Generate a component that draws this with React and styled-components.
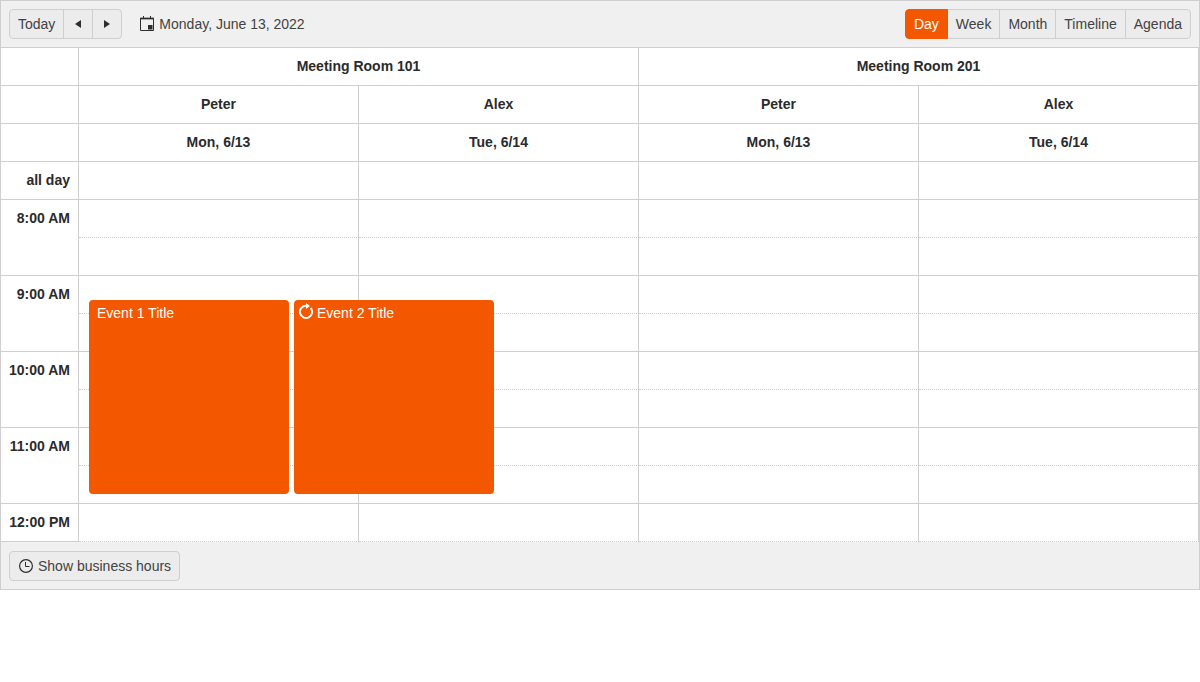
import React from 'react';
import styled, { createGlobalStyle } from 'styled-components';

const GlobalStyle = createGlobalStyle`
    html, body {
        margin: 0;
        padding: 0;
        background: #fff;
    }
    body {
        font-family: "Liberation Sans", Arial, sans-serif;
        font-size: 14px;
        line-height: 20px;
        color: #424242;
    }
`;

const Scheduler = styled.div`
    width: 1200px;
    box-sizing: border-box;
    border: 1px solid #cfcfcf;
`;

const Bar = styled.div`
    height: 47px;
    box-sizing: border-box;
    padding: ${({ $footer }) => ($footer ? '9px 8px 8px' : '8px')};
    display: flex;
    align-items: flex-start;
    background: #f0f0f0;
    border-bottom: ${({ $footer }) => ($footer ? 'none' : '1px solid #cfcfcf')};
`;

const ButtonGroup = styled.div`
    display: flex;
    height: 30px;
`;

const GroupButton = styled.div`
    position: relative;
    z-index: ${({ $active }) => ($active ? 1 : 0)};
    display: flex;
    align-items: center;
    justify-content: center;
    box-sizing: border-box;
    height: 30px;
    width: ${({ $width }) => ($width ? `${$width}px` : 'auto')};
    padding: ${({ $width }) => ($width ? '0' : '0 8px')};
    margin-left: -1px;
    border: 1px solid ${({ $active }) => ($active ? '#f35800' : '#cfcfcf')};
    background: ${({ $active }) => ($active ? '#f35800' : '#ececec')};
    color: ${({ $active }) => ($active ? '#fff' : '#424242')};

    &:first-child {
        margin-left: 0;
        border-radius: 4px 0 0 4px;
    }

    &:last-child {
        border-radius: 0 4px 4px 0;
    }
`;

const DateNav = styled.div`
    display: flex;
    align-items: center;
    gap: 5px;
    height: 30px;
    margin-left: 18px;
    color: #424242;
`;

const Spacer = styled.div`
    flex: 1;
`;

const Body = styled.div`
    position: relative;
    display: grid;
    grid-template-columns: 78px repeat(4, 280px);
    grid-auto-rows: 38px;
    color: #2b2b2b;
`;

const Cell = styled.div`
    box-sizing: border-box;
    border-right: 1px solid #cfcfcf;
    border-bottom: 1px solid #cfcfcf;
    grid-column: span ${({ $span }) => $span || 1};
`;

const HeadCell = styled(Cell)`
    display: flex;
    align-items: center;
    justify-content: center;
    padding-bottom: 1px;
    font-weight: bold;
`;

const TimeCell = styled(Cell)`
    grid-row: span ${({ $rows }) => $rows || 1};
    padding: 8px 8px 0 0;
    text-align: right;
    font-weight: bold;
`;

const Slot = styled(Cell)`
    border-bottom-style: ${({ $dotted }) => ($dotted ? 'dotted' : 'solid')};
`;

const Event = styled.div`
    position: absolute;
    left: ${({ $left }) => $left}px;
    top: 252px;
    width: 200px;
    height: 194px;
    box-sizing: border-box;
    display: flex;
    align-items: flex-start;
    gap: 3px;
    padding: ${({ $recurring }) => ($recurring ? '3px 5px' : '3px 8px')};
    border-radius: 4px;
    background: #f35800;
    color: #fff;
`;

const FooterButton = styled.div`
    display: flex;
    align-items: center;
    gap: 5px;
    height: 30px;
    box-sizing: border-box;
    padding: 0 8px 0 9px;
    border: 1px solid #cfcfcf;
    border-radius: 4px;
    background: #ececec;
    color: #424242;
`;

const ArrowLeft = () => (
    <svg width="6" height="8" viewBox="0 0 6 8">
        <path d="M6 0v8L0 4z" fill="#2e2e2e" />
    </svg>
);

const ArrowRight = () => (
    <svg width="6" height="8" viewBox="0 0 6 8">
        <path d="M0 0v8l6-4z" fill="#2e2e2e" />
    </svg>
);

const CalendarIcon = () => (
    <svg width="14" height="16" viewBox="0 0 14 16" fill="none">
        <path d="M0.5 2.5h13v12h-13z" stroke="#2e2e2e" />
        <path d="M0 1.5h14v2H0z" fill="#2e2e2e" opacity="0.75" />
        <path d="M3.5 0v3M10.5 0v3" stroke="#2e2e2e" />
        <rect x="8" y="9" width="4.5" height="4.5" fill="#2e2e2e" />
    </svg>
);

const ClockIcon = () => (
    <svg width="14" height="14" viewBox="0 0 14 14" fill="none">
        <circle cx="7" cy="7" r="6.4" stroke="#2e2e2e" strokeWidth="1.2" />
        <path d="M6.5 3v4.5h4" stroke="#2e2e2e" />
    </svg>
);

const RecurIcon = () => (
    <svg width="15" height="17" viewBox="0 0 15 17" fill="none">
        <path d="M7 2.8A6.1 6.1 0 1 0 11.7 5" stroke="#fff" strokeWidth="2" />
        <path d="M7 0l4 2.9L7 6z" fill="#fff" />
    </svg>
);

const rooms = ['Meeting Room 101', 'Meeting Room 201'];
const people = ['Peter', 'Alex', 'Peter', 'Alex'];
const dates = ['Mon, 6/13', 'Tue, 6/14', 'Mon, 6/13', 'Tue, 6/14'];
const hours = ['8:00 AM', '9:00 AM', '10:00 AM', '11:00 AM'];
const views = ['Day', 'Week', 'Month', 'Timeline', 'Agenda'];
const columns = [0, 1, 2, 3];

export default function App() {
    return (
        <>
            <GlobalStyle />
            <Scheduler>
                <Bar>
                    <ButtonGroup>
                        <GroupButton>Today</GroupButton>
                        <GroupButton $width={30}><ArrowLeft /></GroupButton>
                        <GroupButton $width={30}><ArrowRight /></GroupButton>
                    </ButtonGroup>
                    <DateNav>
                        <CalendarIcon />
                        Monday, June 13, 2022
                    </DateNav>
                    <Spacer />
                    <ButtonGroup>
                        {views.map(view => (
                            <GroupButton key={view} $active={view === 'Day'}>
                                {view}
                            </GroupButton>
                        ))}
                    </ButtonGroup>
                </Bar>
                <Body>
                    <Cell />
                    {rooms.map(room => (
                        <HeadCell key={room} $span={2}>{room}</HeadCell>
                    ))}
                    <Cell />
                    {people.map((name, i) => (
                        <HeadCell key={i}>{name}</HeadCell>
                    ))}
                    <Cell />
                    {dates.map((date, i) => (
                        <HeadCell key={i}>{date}</HeadCell>
                    ))}
                    <TimeCell>all day</TimeCell>
                    {columns.map(i => <Slot key={i} />)}
                    {hours.map(hour => (
                        <React.Fragment key={hour}>
                            <TimeCell $rows={2}>{hour}</TimeCell>
                            {columns.map(i => <Slot key={i} $dotted />)}
                            {columns.map(i => <Slot key={i} />)}
                        </React.Fragment>
                    ))}
                    <TimeCell>12:00 PM</TimeCell>
                    {columns.map(i => <Slot key={i} $dotted />)}
                    <Event $left={88}>Event 1 Title</Event>
                    <Event $left={293} $recurring>
                        <RecurIcon />
                        Event 2 Title
                    </Event>
                </Body>
                <Bar $footer>
                    <FooterButton>
                        <ClockIcon />
                        Show business hours
                    </FooterButton>
                </Bar>
            </Scheduler>
        </>
    );
}
